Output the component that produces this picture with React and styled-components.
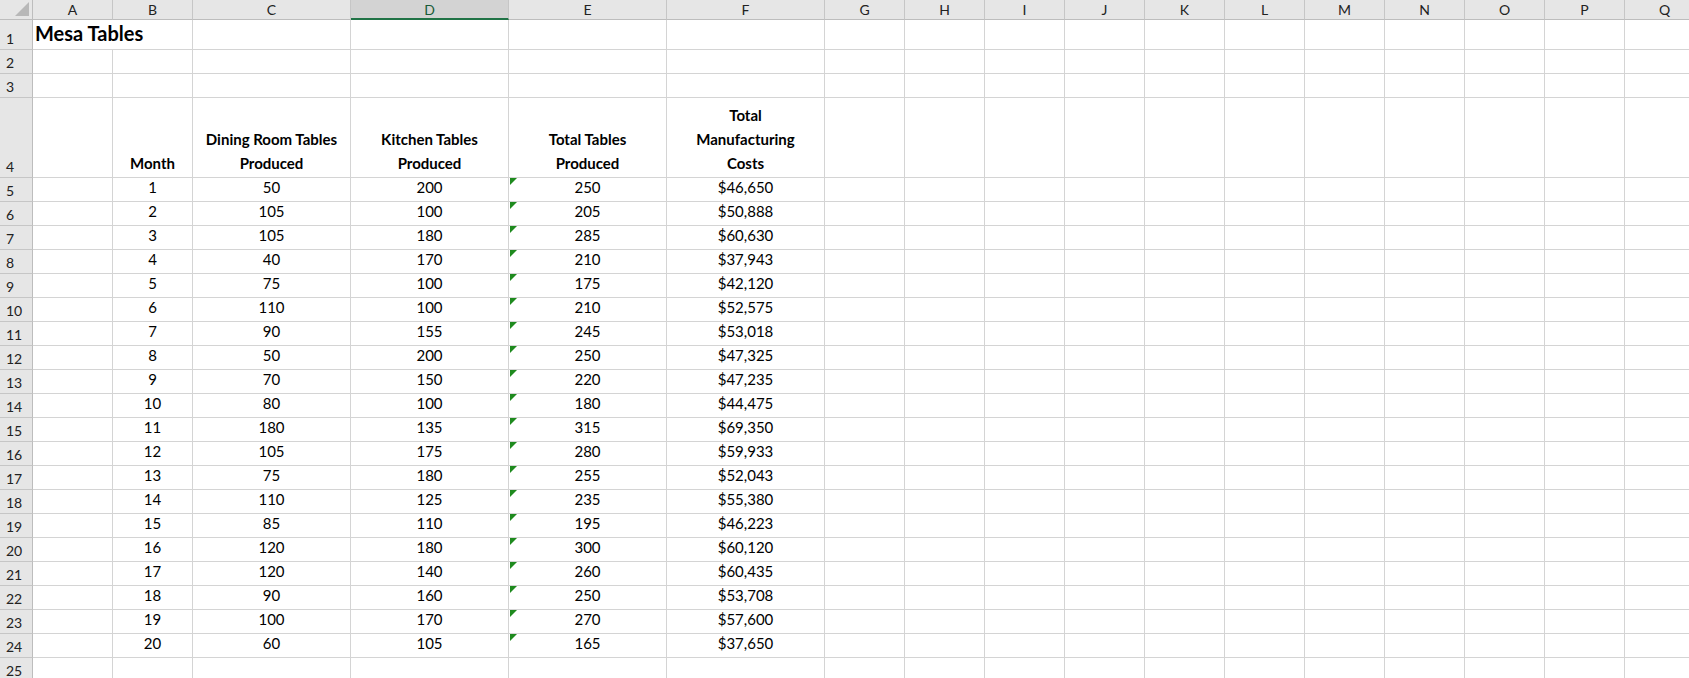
import React from 'react';
import styled, { createGlobalStyle } from 'styled-components';

const Global = createGlobalStyle`
  body { margin: 0; background: #fff; font-family: Lato, "Open Sans", sans-serif; overflow: hidden; }
`;

const cols = ['A','B','C','D','E','F','G','H','I','J','K','L','M','N','O','P','Q'];
const widths = [80,80,158,158,158,158,80,80,80,80,80,80,80,80,80,80,80];
const heights = [30,24,24,80].concat(Array(21).fill(24));

const data = [
  [1,50,200,250,'$46,650'],[2,105,100,205,'$50,888'],[3,105,180,285,'$60,630'],
  [4,40,170,210,'$37,943'],[5,75,100,175,'$42,120'],[6,110,100,210,'$52,575'],
  [7,90,155,245,'$53,018'],[8,50,200,250,'$47,325'],[9,70,150,220,'$47,235'],
  [10,80,100,180,'$44,475'],[11,180,135,315,'$69,350'],[12,105,175,280,'$59,933'],
  [13,75,180,255,'$52,043'],[14,110,125,235,'$55,380'],[15,85,110,195,'$46,223'],
  [16,120,180,300,'$60,120'],[17,120,140,260,'$60,435'],[18,90,160,250,'$53,708'],
  [19,100,170,270,'$57,600'],[20,60,105,165,'$37,650'],
];

const Sheet = styled.div`
  display: grid;
  grid-template-columns: 33px ${widths.map(w => w + 'px').join(' ')};
  grid-template-rows: 20px ${heights.map(h => h + 'px').join(' ')};
  font-size: 15px;
  color: #000;
`;

const Corner = styled.div`
  background: #e6e6e6;
  border-right: 1px solid #bdbdbd;
  border-bottom: 1px solid #bdbdbd;
  position: relative;
  &::after {
    content: '';
    position: absolute;
    right: 3px; bottom: 3px;
    border-left: 14px solid transparent;
    border-bottom: 14px solid #b8b8b8;
  }
`;

const ColHead = styled.div`
  background: ${p => p.$sel ? '#d3d3d3' : '#e6e6e6'};
  border-right: 1px solid #c6c6c6;
  border-bottom: ${p => p.$sel ? '2px solid #217346' : '1px solid #bdbdbd'};
  color: ${p => p.$sel ? '#185c37' : '#222'};
  display: flex;
  align-items: center;
  justify-content: center;
  font-size: 14px;
`;

const RowHead = styled.div`
  background: #e6e6e6;
  border-right: 1px solid #bdbdbd;
  border-bottom: 1px solid #c6c6c6;
  display: flex;
  align-items: flex-end;
  padding: 0 0 2px 6px;
  font-size: 14px;
  color: #222;
`;

const Cell = styled.div`
  border-right: 1px solid #d4d4d4;
  border-bottom: 1px solid #d4d4d4;
  display: flex;
  flex-direction: column;
  justify-content: flex-end;
  align-items: center;
  text-align: center;
  padding-bottom: 2px;
  line-height: 24px;
  position: relative;
  white-space: nowrap;
  font-weight: ${p => p.$bold ? 700 : 400};
  ${p => p.$flag && `
    &::before {
      content: '';
      position: absolute;
      left: 1px; top: 0;
      border-top: 7px solid #1e8a1e;
      border-right: 7px solid transparent;
    }
  `}
`;

const Title = styled(Cell)`
  align-items: flex-start;
  padding-left: 2px;
  font-size: 20px;
  font-weight: 700;
  overflow: visible;
  z-index: 1;
  border-right: none;
  line-height: 28px;
`;

const headers = [null, 'Month', 'Dining Room Tables|Produced', 'Kitchen Tables|Produced', 'Total Tables|Produced', 'Total|Manufacturing|Costs'];

export default function App() {
  const rows = [];
  for (let r = 1; r <= 25; r++) {
    rows.push(<RowHead key={'h' + r}>{r}</RowHead>);
    cols.forEach((c, i) => {
      const k = c + r;
      if (r === 1 && i === 0) { rows.push(<Title key={k}>Mesa Tables</Title>); return; }
      if (r === 4 && i >= 1 && i <= 5) {
        rows.push(<Cell key={k} $bold>{headers[i].split('|').map(t => <span key={t}>{t}</span>)}</Cell>);
        return;
      }
      if (r >= 5 && r <= 24 && i >= 1 && i <= 5) {
        rows.push(<Cell key={k} $flag={i === 4}>{data[r - 5][i - 1]}</Cell>);
        return;
      }
      rows.push(<Cell key={k} />);
    });
  }
  return (
    <>
      <Global />
      <Sheet>
        <Corner />
        {cols.map(c => <ColHead key={c} $sel={c === 'D'}>{c}</ColHead>)}
        {rows}
      </Sheet>
    </>
  );
}
